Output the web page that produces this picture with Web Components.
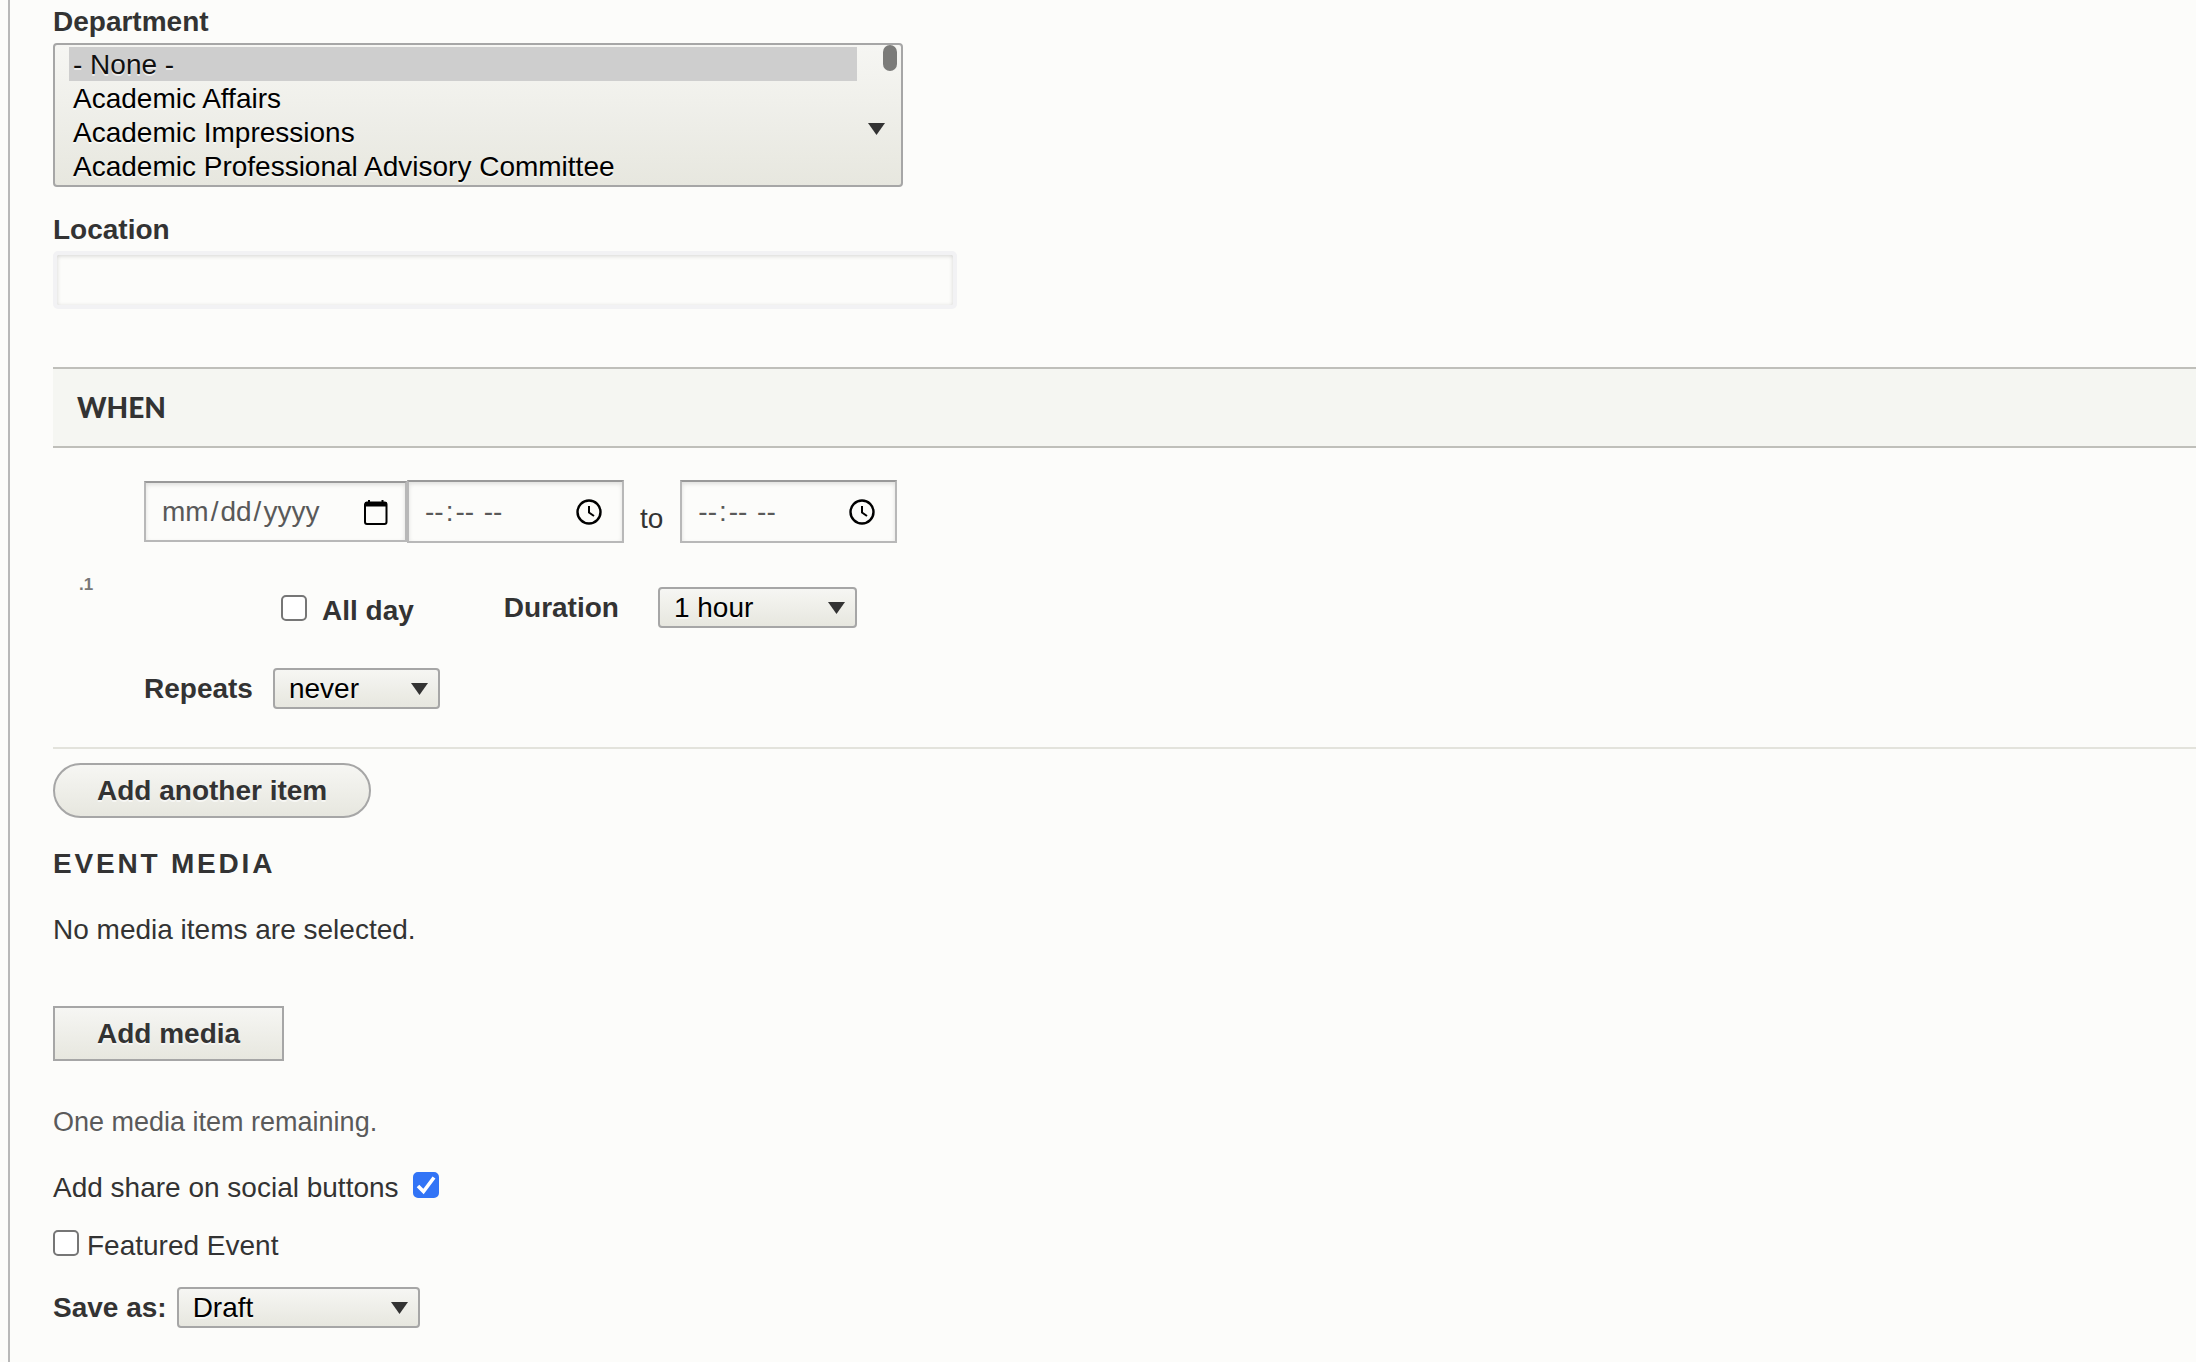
<!DOCTYPE html>
<html lang="en">
<head>
<meta charset="utf-8">
<title>Event form</title>
<style>
html { background: #fcfcfa; }
body { margin: 0; font-family: "Liberation Sans", Arial, sans-serif; font-size: 28px; line-height: 34px; color: #333; }
</style>
</head>
<body>
<event-form></event-form>

<script>
const arrow = '<svg class="arrow" viewBox="0 0 17 12" width="17" height="12" aria-hidden="true"><path d="M0 0H17L8.500 12Z" fill="#333"/></svg>';

const define = (name, css, html) => customElements.define(name, class extends HTMLElement {
  constructor() {
    super();
    const root = this.attachShadow({ mode: 'open' });
    const t = document.createElement('template');
    const body = typeof html === 'function' ? html(this) : html;
    t.innerHTML = `<style>:host,*{box-sizing:border-box}${css}</style>${body}`;
    root.append(t.content);
  }
});

define('list-field', `
  :host { display: flex; flex-direction: column; gap: 3px; align-items: flex-start; }
  label { font-weight: 700; line-height: 36px; }
  .box { position: relative; width: 850px; max-width: 100%; }
  select { display: block; width: 100%; height: auto; margin: 0; padding: 2px 44px 2px 14px; border: 2px solid #a6a6a6; border-radius: 4px;
    background: linear-gradient(#f6f6f3, #e7e7df); font: inherit; color: #000; text-shadow: 0 2px rgba(255,255,255,.6);
    overflow: hidden; outline: none; scrollbar-width: none; appearance: none; }
  option { padding: 2px 4px 0; height: 34px; min-height: 34px; line-height: 32px; }
  .arrow { position: absolute; right: 18px; bottom: 52px; pointer-events: none; }
  .thumb { position: absolute; right: 6px; top: 2px; width: 14px; height: 26px; border-radius: 7px; background: #7b7b79; pointer-events: none; }
`, `<label for="s">Department</label>
  <div class="box"><select id="s" size="4" multiple>
    <option selected>- None -</option><option>Academic Affairs</option><option>Academic Impressions</option><option>Academic Professional Advisory Committee</option>
  </select><span class="thumb"></span>${arrow}</div>`);

define('text-field', `
  :host { display: flex; flex-direction: column; gap: 3px; align-items: flex-start; }
  label { font-weight: 700; line-height: 36px; }
  input { width: 904px; max-width: 100%; height: 58px; margin: 0; padding: 0 12px; border: 4px solid #f2f2f4; border-radius: 5px; outline: none;
    background: #fcfcfa; font: inherit; color: #333; box-shadow: inset 0 1px 4px rgba(0,0,0,.16); }
`, `<label for="t">Location</label><input id="t" type="text">`);

define('select-field', `
  :host { display: flex; align-items: center; gap: var(--gap, 10px); }
  label { font-weight: 700; }
  .box { position: relative; width: var(--w); }
  select { display: block; appearance: none; width: 100%; height: 41px; margin: 0; padding: 0 44px 0 14px; border: 2px solid #a6a6a6; border-radius: 4px;
    background: linear-gradient(#f6f6f3, #e7e7df); font: inherit; color: #000; text-shadow: 0 2px rgba(255,255,255,.6); }
  .arrow { position: absolute; right: 12px; top: 15px; pointer-events: none; }
`, el => `<label for="s">${el.getAttribute('label')}</label><div class="box"><select id="s"><option>${el.getAttribute('value')}</option></select>${arrow}</div>`);

define('check-field', `
  :host { display: flex; align-items: center; gap: var(--gap, 8px); font-weight: var(--weight, 400); }
  :host([reverse]) { flex-direction: row-reverse; justify-content: flex-end; }
  .box { position: relative; width: 26px; height: 26px; margin-bottom: 6px; }
  input { appearance: none; display: block; width: 26px; height: 26px; margin: 0; border: 2px solid #767676; border-radius: 5px; background: #fff; }
  input:checked { border-color: #3274f6; background: #3274f6; }
  svg { position: absolute; inset: 0; display: none; pointer-events: none; }
  input:checked + svg { display: block; }
`, el => `<span class="box"><input id="c" type="checkbox"${el.hasAttribute('checked') ? ' checked' : ''}><svg viewBox="0 0 26 26" width="26" height="26" aria-hidden="true"><path d="M5 14l5.500 5.500L21 5.500" fill="none" stroke="#fff" stroke-width="3.600"/></svg></span><label for="c"><slot></slot></label>`);

define('form-button', `
  :host { display: flex; }
  button { height: 55px; margin: 0; padding: 0 42px; border: 2px solid #a6a6a6; border-radius: var(--radius, 28px);
    background: linear-gradient(#f6f6f3, #e7e7df); font: inherit; font-weight: 700; color: #333; text-shadow: 0 2px rgba(255,255,255,.6); }
`, `<button type="button"><slot></slot></button>`);

const icons = {
  date: '<path d="M5 3.500H21.500A2 2 0 0 1 23.500 5.500V23A2 2 0 0 1 21.500 25H4A2 2 0 0 1 2 23V5.500A2 2 0 0 1 4 3.500Z" fill="none" stroke="#000" stroke-width="2"/><path d="M2 3H23.500V7.500H2ZM5 1H7V4H5ZM18.500 1H20.500V4H18.500Z" fill="#000"/>',
  time: '<circle cx="13" cy="13" r="11.500" fill="none" stroke="#000" stroke-width="2.400"/><path d="M13 7V13.500L18 17" fill="none" stroke="#000" stroke-width="2"/>'
};
define('moment-input', `
  :host { display: block; position: relative; --icon-right: 18px; }
  :host([type="time"]) { --icon-right: 22px; }
  input { display: block; width: var(--w); height: var(--h); margin: 0; padding: 0 14px; border: 2px solid #b8b8b8; border-top-color: #999; outline: none;
    background: #fcfcfa; font: inherit; color: #595959; box-shadow: inset 0 2px 4px rgba(0,0,0,.12); }
  input::-webkit-calendar-picker-indicator { opacity: 0; }
  input::-webkit-datetime-edit-month-field, input::-webkit-datetime-edit-day-field, input::-webkit-datetime-edit-year-field,
  input::-webkit-datetime-edit-hour-field, input::-webkit-datetime-edit-minute-field, input::-webkit-datetime-edit-ampm-field { padding: 0 2px; }
  svg { position: absolute; right: var(--icon-right); top: calc(50% - 13px); pointer-events: none; }
`, el => `<input type="${el.getAttribute('type')}" aria-label="${el.getAttribute('label')}"><svg viewBox="0 0 26 26" width="26" height="26" aria-hidden="true">${icons[el.getAttribute('type')]}</svg>`);

define('when-section', `
  :host { display: block; border-bottom: 2px solid #e3e3dc; }
  h4 { margin: 0; height: 81px; display: flex; align-items: center; padding: 0 24px 2px; border: solid #bfbfba; border-width: 2px 0; background: #f5f6f2;
    font: 900 28px/34px Lato, sans-serif; }
  .body { display: flex; padding: 32px 0 38px; }
  .handle { width: 91px; padding: 94px 0 0 26px; font-size: 17px; font-weight: 700; line-height: 22px; color: #777; }
  .rows { display: flex; flex-direction: column; align-items: flex-start; gap: 40px; }
  .row { display: flex; align-items: center; }
  .to { padding: 14px 17px 0 16px; }
  .opts { align-items: flex-end; padding: 4px 0 0 137px; gap: 90px; }
`, `<h4>WHEN</h4>
  <div class="body"><div class="handle">.1</div>
  <div class="rows">
    <div class="row">
      <moment-input type="date" label="Start date" style="--w:263px;--h:61px"></moment-input>
      <moment-input type="time" label="Start time" style="--w:217px;--h:63px"></moment-input>
      <span class="to">to</span>
      <moment-input type="time" label="End time" style="--w:217px;--h:63px"></moment-input>
    </div>
    <div class="row opts">
      <check-field style="--weight:700;--gap:15px">All day</check-field>
      <select-field label="Duration" value="1 hour" style="--w:199px;--gap:39px"></select-field>
    </div>
    <select-field label="Repeats" value="never" style="--w:167px;--gap:20px"></select-field>
  </div></div>`);

define('media-section', `
  :host { display: flex; flex-direction: column; align-items: flex-start; --radius: 0; }
  h4 { margin: 0 0 32px; font: inherit; font-weight: 700; letter-spacing: .1em; text-transform: uppercase; }
  p { margin: 0; }
  form-button { margin: 59px 0 44px; }
  .note { font-size: 27px; color: #5a5a5a; }
`, `<h4>Event Media</h4><p>No media items are selected.</p><form-button>Add media</form-button><p class="note">One media item remaining.</p>`);

define('event-form', `
  :host { display: block; min-height: 100vh; margin-left: 8px; padding: 4px 0 34px 43px; border-left: 2px solid #b8b8b8; }
  form { display: flex; flex-direction: column; align-items: stretch; }
  text-field { margin-top: 25px; }
  when-section { margin-top: 58px; }
  .add { margin-top: 14px; }
  media-section { margin-top: 29px; }
  .share { margin-top: 32px; }
  .featured { margin-top: 24px; }
  .save { margin-top: 24px; }
`, `<form>
  <list-field></list-field>
  <text-field></text-field>
  <when-section></when-section>
  <form-button class="add">Add another item</form-button>
  <media-section></media-section>
  <check-field class="share" reverse checked style="--gap:14px">Add share on social buttons</check-field>
  <check-field class="featured">Featured Event</check-field>
  <select-field class="save" label="Save as:" value="Draft" style="--w:243px"></select-field>
</form>`);
</script>
</body>
</html>
